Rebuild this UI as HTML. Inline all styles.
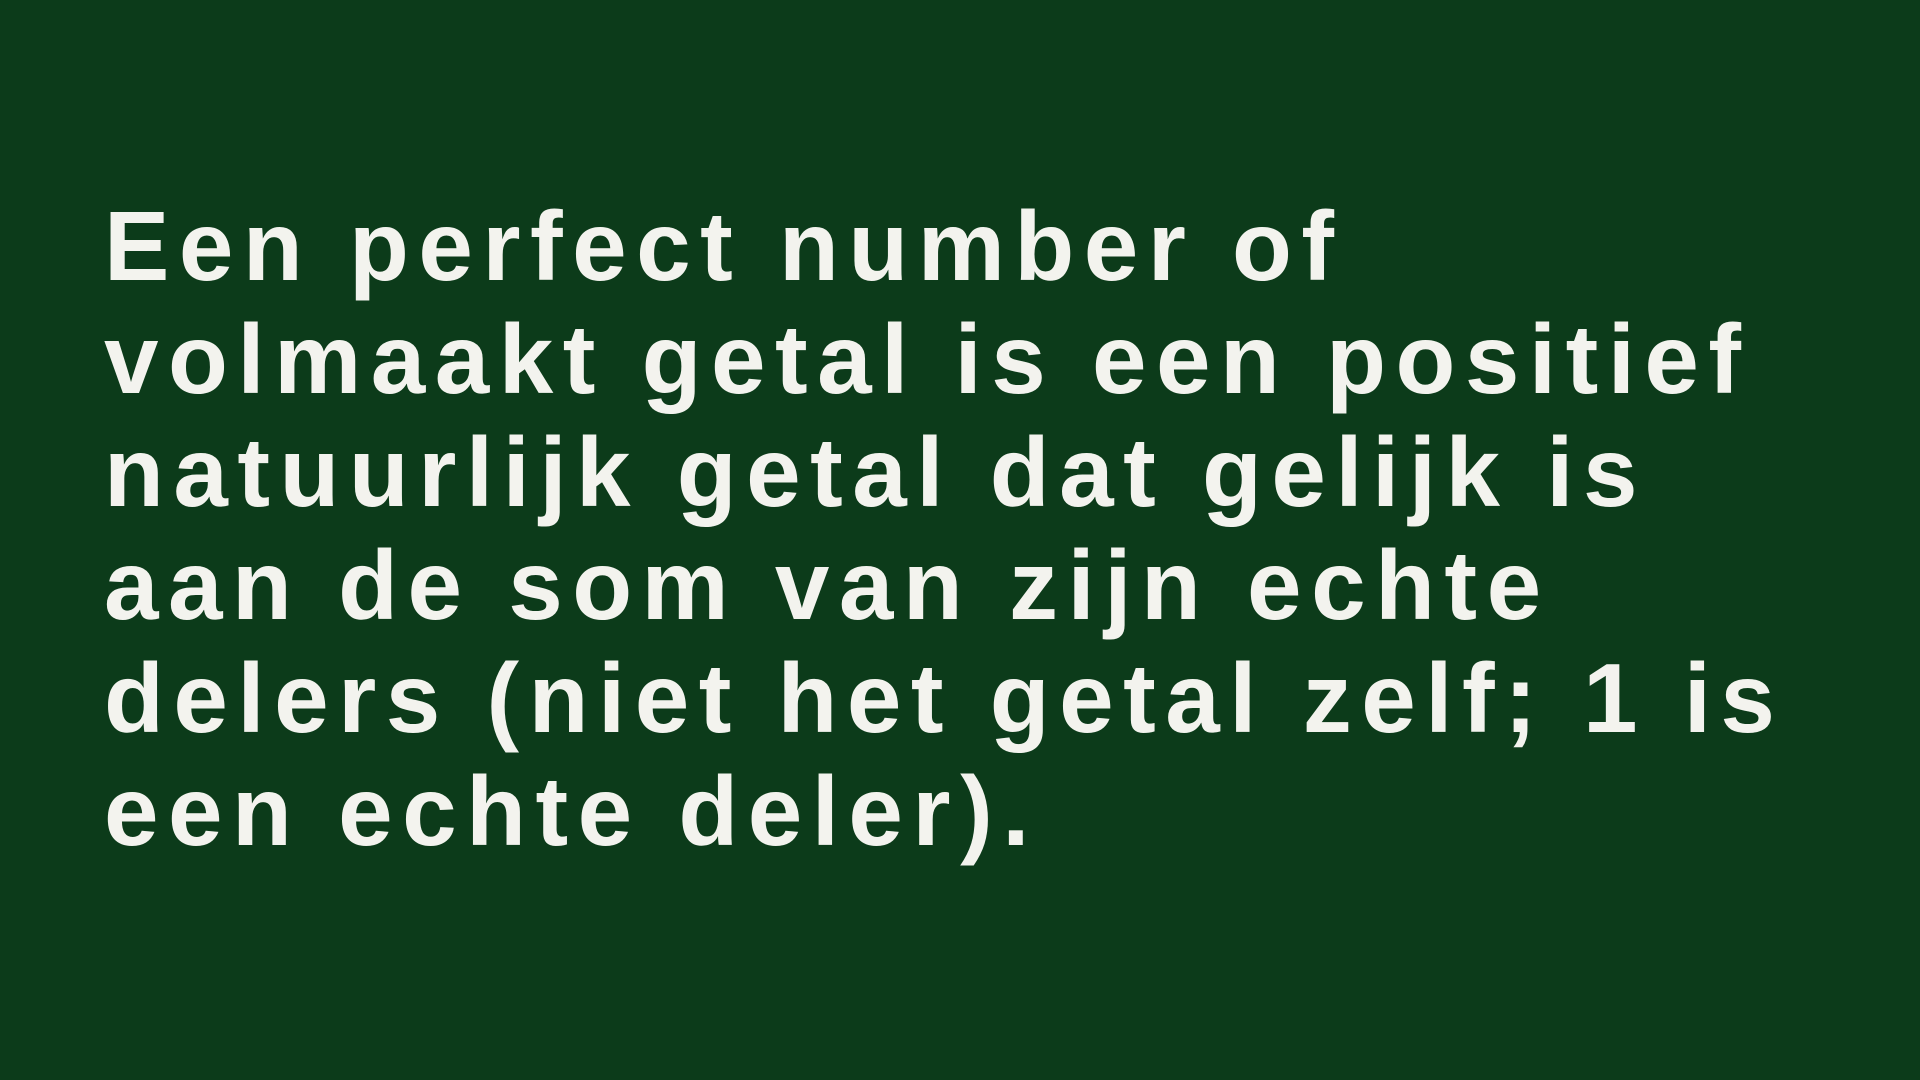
<!DOCTYPE html>
<html><head><meta charset="utf-8">
<style>
html,body{margin:0;padding:0;}
body{width:1920px;height:1080px;background:#0c3b1a;overflow:hidden;position:relative;}
.t{position:absolute;left:104px;top:190px;color:#f3f3ee;font-family:"Liberation Sans",sans-serif;font-weight:bold;font-size:98px;line-height:113px;white-space:nowrap;letter-spacing:9.5px;}
</style></head><body>
<div class="t">Een perfect number of<br>volmaakt getal is een positief<br>natuurlijk getal dat gelijk is<br>aan de som van zijn echte<br>delers (niet het getal zelf; 1 is<br>een echte deler).</div>
</body></html>
